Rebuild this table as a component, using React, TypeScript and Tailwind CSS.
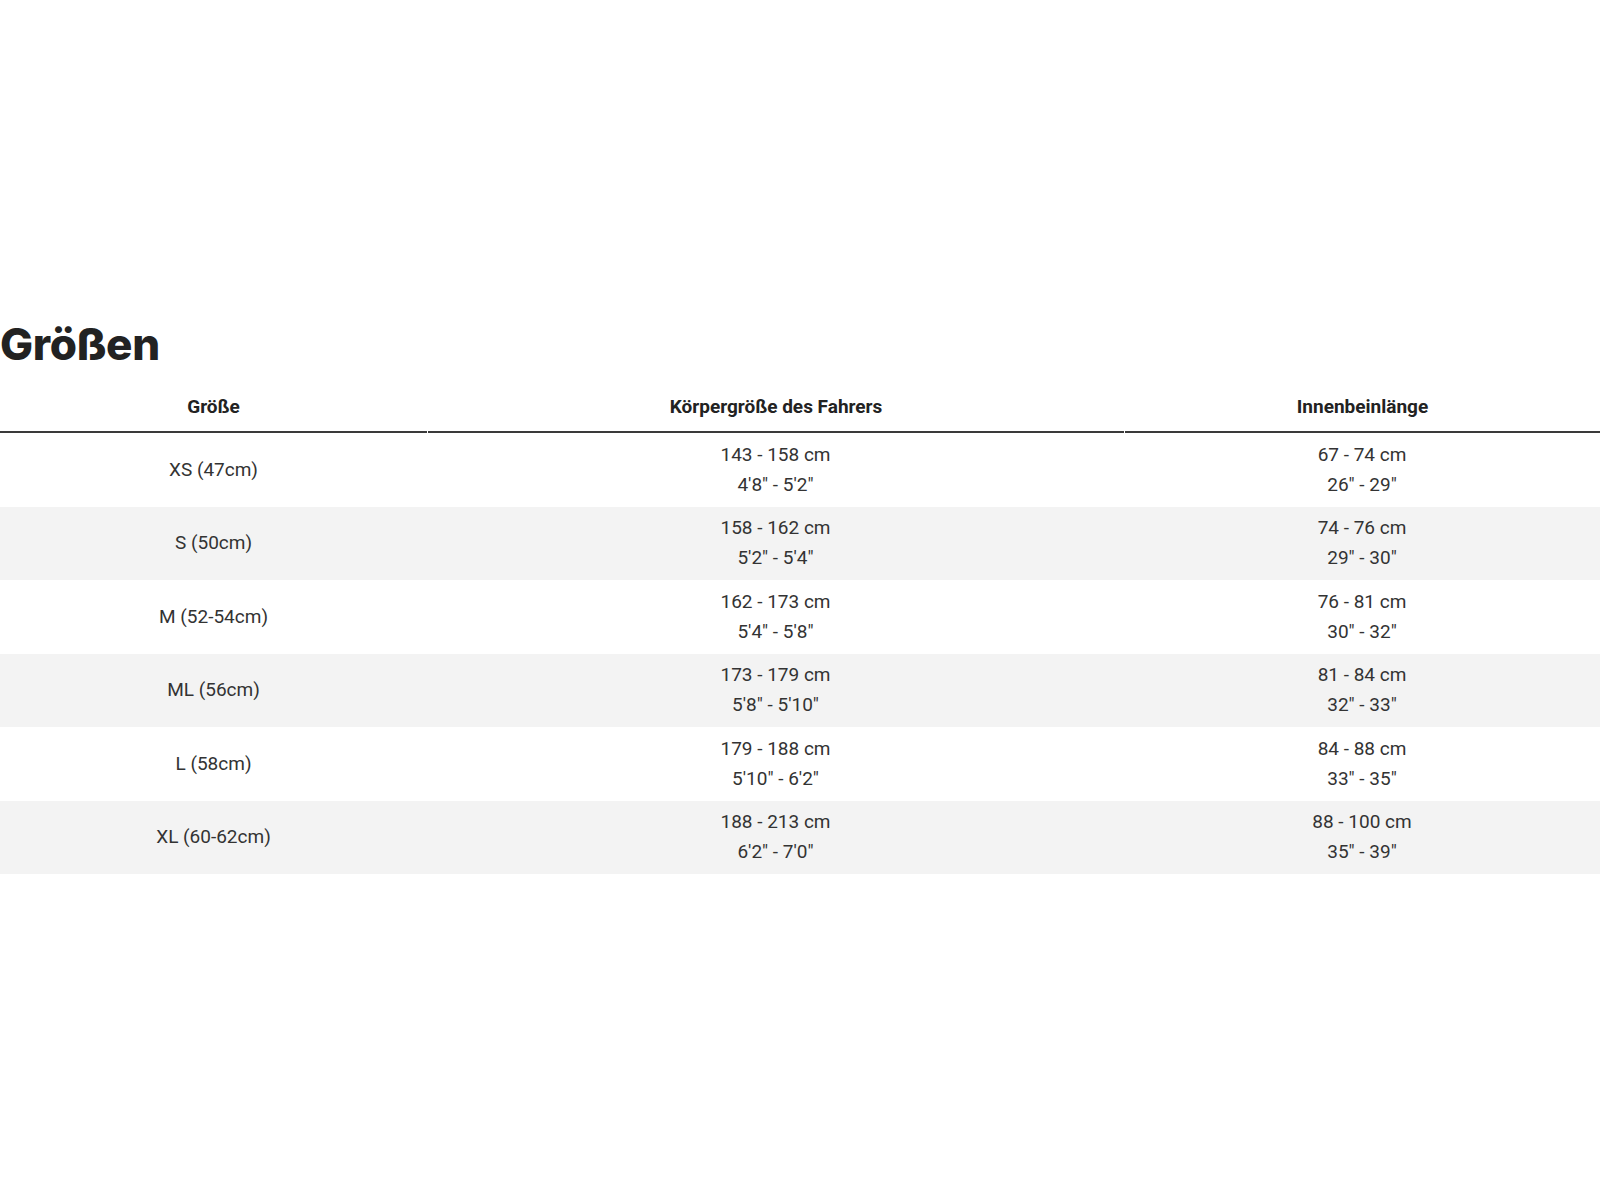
const rows = [
  { size: 'XS (47cm)', height: ['143 - 158 cm', '4\'8" - 5\'2"'], inseam: ['67 - 74 cm', '26" - 29"'] },
  { size: 'S (50cm)', height: ['158 - 162 cm', '5\'2" - 5\'4"'], inseam: ['74 - 76 cm', '29" - 30"'] },
  { size: 'M (52-54cm)', height: ['162 - 173 cm', '5\'4" - 5\'8"'], inseam: ['76 - 81 cm', '30" - 32"'] },
  { size: 'ML (56cm)', height: ['173 - 179 cm', '5\'8" - 5\'10"'], inseam: ['81 - 84 cm', '32" - 33"'] },
  { size: 'L (58cm)', height: ['179 - 188 cm', '5\'10" - 6\'2"'], inseam: ['84 - 88 cm', '33" - 35"'] },
  { size: 'XL (60-62cm)', height: ['188 - 213 cm', '6\'2" - 7\'0"'], inseam: ['88 - 100 cm', '35" - 39"'] },
];

const cols = 'grid grid-cols-[427px_697px_476px]';

function Cell({ lines }: { lines: string[] }) {
  return (
    <div className="flex flex-col items-center justify-center">
      {lines.map((l) => (
        <span key={l} className="leading-[30px]">
          {l}
        </span>
      ))}
    </div>
  );
}

export default function App() {
  return (
    <div className="min-h-[1200px] w-[1600px] bg-white pt-[322px] font-['Roboto',sans-serif] text-[19px] text-[#333]">
      <h2 className="font-['Inter',sans-serif] text-[44px] font-extrabold leading-none tracking-[-0.3px] text-[#222]">
        Größen
      </h2>

      <div className={`${cols} mt-[14px]`}>
        {['Größe', 'Körpergröße des Fahrers', 'Innenbeinlänge'].map((h, i) => (
          <div
            key={h}
            className={`flex h-[53px] items-center justify-center border-b-2 border-[#3a3a3a] pt-[4px] font-bold text-[#222] ${i > 0 ? 'ml-px' : ''}`}
          >
            {h}
          </div>
        ))}
      </div>

      {rows.map((r, i) => (
        <div key={r.size} className={`${cols} h-[73.5px] ${i % 2 === 1 ? 'bg-[#f3f3f3]' : 'bg-white'}`}>
          <div className="flex items-center justify-center">{r.size}</div>
          <Cell lines={r.height} />
          <Cell lines={r.inseam} />
        </div>
      ))}
    </div>
  );
}
